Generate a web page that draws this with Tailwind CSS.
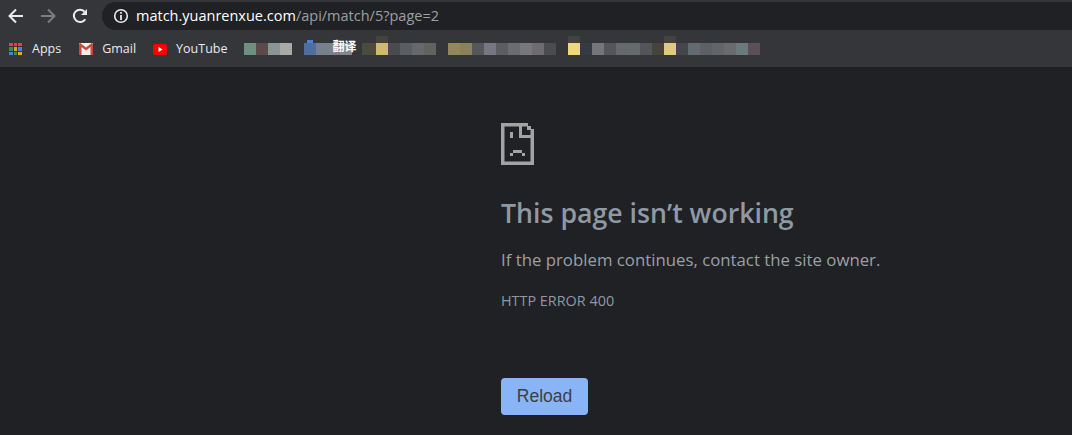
<!DOCTYPE html>
<html lang="en">
  <head>
    <meta charset="UTF-8" />
    <title>match.yuanrenxue.com</title>
    <script src="https://cdn.jsdelivr.net/npm/@tailwindcss/browser@4"></script>
  </head>
  <body class="w-[1072px] h-[435px] overflow-hidden bg-[#202124] font-['Open_Sans',sans-serif]">
    <!-- toolbar -->
    <div class="h-[31px] bg-[#35363a] flex items-center">
      <div class="w-[102px] h-full flex items-center pl-[7px] gap-[14px] shrink-0">
        <svg class="w-[18px] h-[18px]" viewBox="0 0 18 18" fill="none" stroke="#e8eaed" stroke-width="2">
          <path d="M16 9H3M9 2.5L2.5 9L9 15.5" />
        </svg>
        <svg class="w-[18px] h-[18px]" viewBox="0 0 18 18" fill="none" stroke="#7b7d80" stroke-width="2">
          <path d="M2 9H15M9 2.5L15.5 9L9 15.5" />
        </svg>
        <svg class="w-[18px] h-[18px]" viewBox="0 0 18 18" fill="none">
          <path d="M14.3 12.2A6.2 6.2 0 1 1 13.6 4.6" stroke="#e8eaed" stroke-width="2" />
          <path d="M16 2V8H10Z" fill="#e8eaed" />
        </svg>
      </div>
      <div class="flex-1 h-[28px] mt-[1px] bg-[#202124] rounded-l-[14px] flex items-center pl-[11px]">
        <svg class="w-[16px] h-[16px] shrink-0" viewBox="0 0 16 16" fill="none">
          <circle cx="8" cy="8" r="6.3" stroke="#e8eaed" stroke-width="1.6" />
          <path d="M8 7V12M8 4V5.8" stroke="#e8eaed" stroke-width="1.8" />
        </svg>
        <div class="ml-[7px] text-[14.5px] text-white leading-none">match.yuanrenxue.com<span class="text-[#9aa0a6]">/api/match/5?page=2</span></div>
      </div>
    </div>

    <!-- bookmarks bar -->
    <div class="h-[36px] bg-[#35363a] flex items-center text-[12.5px] text-[#e8eaed]">
      <div class="ml-[9px] grid grid-cols-3 gap-[1px] w-[13px] shrink-0">
        <div class="h-[3.5px] bg-[#d8483c]"></div><div class="h-[3.5px] bg-[#d8483c]"></div><div class="h-[3.5px] bg-[#d8483c]"></div>
        <div class="h-[3.5px] bg-[#3d8a50]"></div><div class="h-[3.5px] bg-[#d8a030]"></div><div class="h-[3.5px] bg-[#4a80d8]"></div>
        <div class="h-[3.5px] bg-[#4a80d8]"></div><div class="h-[3.5px] bg-[#3d8a50]"></div><div class="h-[3.5px] bg-[#eaa820]"></div>
      </div>
      <span class="ml-[10px]">Apps</span>
      <svg class="ml-[18px] w-[14px] h-[12px] shrink-0" viewBox="0 0 14 12">
        <rect width="14" height="12" rx="1" fill="#f1efec" />
        <path d="M0 1V12H2.5V4L7 7.6L11.5 4V12H14V1L12.8 0L7 4.6L1.2 0Z" fill="#c9483c" />
      </svg>
      <span class="ml-[9px]">Gmail</span>
      <svg class="ml-[17px] w-[14px] h-[11px] shrink-0" viewBox="0 0 14 11">
        <rect width="14" height="11" rx="2.5" fill="#f00" />
        <path d="M5.5 3V8L9.6 5.5Z" fill="#fff" />
      </svg>
      <span class="ml-[9px]">YouTube</span>

      <!-- blurred bookmarks -->
      <div class="ml-[16px] flex items-center shrink-0">
        <div class="w-3 h-3 bg-[#6f9080]"></div>
        <div class="w-3 h-3 bg-[#5a4a4a]"></div>
        <div class="w-3 h-3 bg-[#8b9694]"></div>
        <div class="w-3 h-3 bg-[#a8aaa6]"></div>
        <div class="w-3 h-3 ml-3 bg-[#4f6d9f] relative">
          <div class="absolute left-[3px] -top-[3px] w-[6px] h-[3px] bg-[#4a80d8]"></div>
        </div>
        <div class="w-3 h-3 bg-[#76808f]"></div>
        <div class="w-3 h-3 bg-[#7c8088] relative">
          <span class="absolute left-[5px] -top-[3px] text-[12px] leading-[12px] font-bold text-white font-['Noto_Sans_CJK_SC',sans-serif] whitespace-nowrap">翻译</span>
        </div>
        <div class="w-3 h-3 bg-[#85878a]"></div>
        <div class="w-[14px] h-3 ml-[10px] bg-[#4d4b3d]"></div>
        <div class="w-3 h-3 bg-[#cfba6e] relative">
          <div class="absolute left-0 -top-[7px] w-3 h-[7px] bg-[#45443a]"></div>
        </div>
        <div class="w-3 h-3 bg-[#494b4e]"></div>
        <div class="w-3 h-3 bg-[#5a5e62]"></div>
        <div class="w-3 h-3 bg-[#66686c]"></div>
        <div class="w-3 h-3 bg-[#62635f]"></div>
        <div class="w-3 h-3 ml-3 bg-[#93885c]"></div>
        <div class="w-3 h-3 bg-[#8b8259]"></div>
        <div class="w-3 h-3 bg-[#55575a]"></div>
        <div class="w-3 h-3 bg-[#777682]"></div>
        <div class="w-3 h-3 bg-[#5c5d60]"></div>
        <div class="w-3 h-3 bg-[#6b6c72]"></div>
        <div class="w-3 h-3 bg-[#78787c]"></div>
        <div class="w-3 h-3 bg-[#6e6c6f]"></div>
        <div class="w-3 h-3 bg-[#4b4b50]"></div>
        <div class="w-3 h-3 ml-3 bg-[#f0d77a] relative">
          <div class="absolute left-0 -top-[7px] w-3 h-[7px] bg-[#45443a]"></div>
        </div>
        <div class="w-3 h-3 bg-[#363a44]"></div>
        <div class="w-3 h-3 bg-[#75767a]"></div>
        <div class="w-3 h-3 bg-[#55565b]"></div>
        <div class="w-3 h-3 bg-[#66686c]"></div>
        <div class="w-3 h-3 bg-[#656a6d]"></div>
        <div class="w-3 h-3 bg-[#535558]"></div>
        <div class="w-3 h-3 bg-[#47443c]"></div>
        <div class="w-3 h-3 bg-[#e0ca7d] relative">
          <div class="absolute left-0 -top-[7px] w-3 h-[7px] bg-[#45443a]"></div>
        </div>
        <div class="w-3 h-3 bg-[#45464b]"></div>
        <div class="w-3 h-3 bg-[#626b70]"></div>
        <div class="w-3 h-3 bg-[#5e6064]"></div>
        <div class="w-3 h-3 bg-[#60666b]"></div>
        <div class="w-3 h-3 bg-[#6a6b6e]"></div>
        <div class="w-3 h-3 bg-[#6b7a7e]"></div>
        <div class="w-3 h-3 bg-[#5c4f57]"></div>
      </div>
    </div>

    <!-- error page -->
    <main class="pl-[501px] pt-[56px] text-[#9aa0a6]">
      <svg class="w-[33px] h-[42px] block" viewBox="0 0 33 42" fill="#a3a3a3">
        <path d="M0 0H27V3H30V6H33V42H0ZM3.5 3.5V38.5H29.5V15H18V3.5ZM21 3.5V12H29.5V7H26V3.5Z" fill-rule="evenodd" />
        <rect x="9" y="9" width="3" height="6" />
        <rect x="12" y="27" width="9" height="3" />
        <rect x="9" y="30" width="3" height="3" />
        <rect x="21" y="30" width="3" height="3" />
      </svg>
      <h1 class="mt-[30px] text-[26.7px] leading-[36px] font-semibold text-[#8e99a4]">This page isn’t working</h1>
      <p class="mt-[17px] text-[16.8px] leading-[24px]">If the problem continues, contact the site owner.</p>
      <p class="mt-[19px] text-[14.4px] leading-[20px] text-[#8e99a4]">HTTP ERROR 400</p>
      <button class="mt-[67px] w-[87px] h-[37px] rounded-[4px] bg-[#8ab4f8] text-[#3c4043] text-[17.5px] font-['Liberation_Sans',sans-serif]">Reload</button>
    </main>
  </body>
</html>
